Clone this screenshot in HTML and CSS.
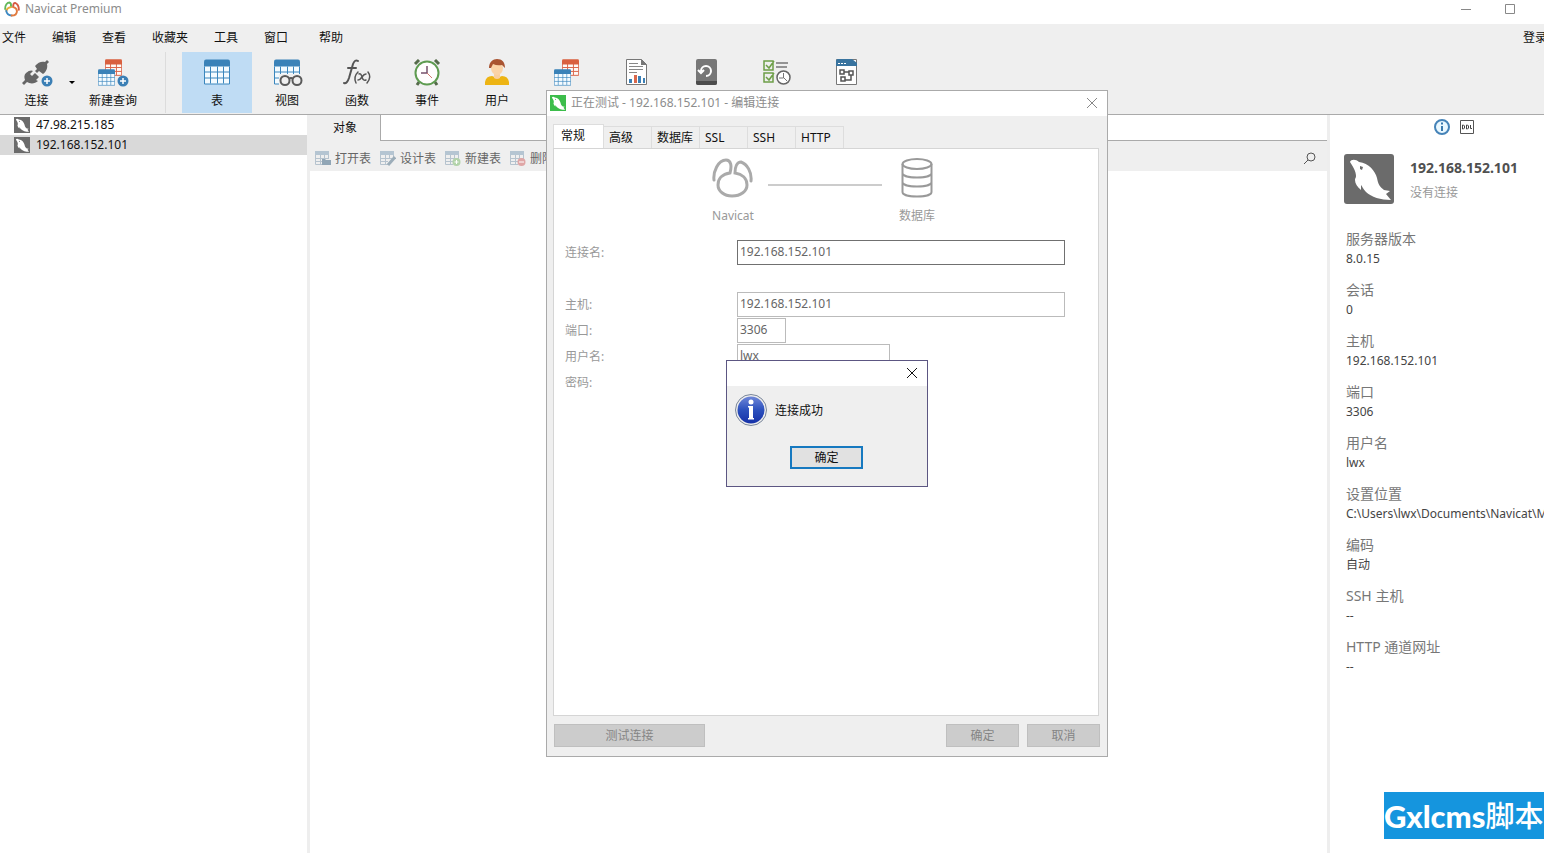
FILE: index.html
```html
<!DOCTYPE html>
<html lang="zh-CN">
<head>
<meta charset="utf-8">
<title>Navicat Premium</title>
<link rel="stylesheet" href="styles.css">
</head>
<body>
<svg class="defs" aria-hidden="true">
  <symbol id="dolphin" viewBox="0 0 50 50">
    <path fill="#fff" fill-rule="evenodd" d="M6 8C7 5 12 5 15 8C25 9 31 17 33 24C34 30 36 33 40 36L46 37L42 40L47 46C37 46 27 43 22 38C19 35 18 32 17 31L17 36C13 33 11 29 11 26C11 24 12 24 12 22C12 17 9 13 6 8ZM16 12l3 1-1 3-2-1z"/>
  </symbol>
  <symbol id="table" viewBox="0 0 26 25">
    <path fill="#f4fbff" d="M.5 1h25v23.500H.5z"/>
    <path fill="none" stroke="#3a86bd" d="M.5 7v17.500h25V7M.5 12.500h25M.5 18.500h25M6.500 7v17M13.500 7v17M19.500 7v17"/>
    <path fill="#3a82b8" d="M0 2q0-2 2-2h22q2 0 2 2v5H0z"/>
  </symbol>
  <symbol id="redtable" viewBox="0 0 26 25">
    <path fill="#fff9f6" d="M.5 1h25v23.500H.5z"/>
    <path fill="none" stroke="#d9674b" stroke-width="1.500" d="M.5 7v17.500h25V7M.5 12.500h25M.5 18.500h25M8.500 7v17M17.500 7v17"/>
    <path fill="#d9603f" d="M0 2q0-2 2-2h22q2 0 2 2v6H0z"/>
  </symbol>
  <symbol id="plus" viewBox="0 0 12 12">
    <circle cx="6" cy="6" r="5.500" fill="#3b7fb5"/><path stroke="#fff" stroke-width="1.500" d="M6 3v6M3 6h6"/>
  </symbol>
  <symbol id="minitable" viewBox="0 0 16 16">
    <path fill="none" stroke="#b6c3ce" d="M.5 4v9.500H8M.5 7.500h13M.5 10.500H8M5.500 4v9.500M9.500 4v4M13.500 4v4"/>
    <path fill="#b5c5d2" d="M0 0h14v4H0z"/>
  </symbol>
  <symbol id="rabbit" viewBox="0 0 42 40">
    <path stroke-linecap="round" d="M2 22C1 14 6 2 14 2C19 2 20 8 18 15M18 15C10 16 6 21 6 27C6 33 12 38 20 38C29 38 35 33 35 27C35 20 30 16 23 15C23 9 25 4 29 4C35 6 40 14 39 23"/>
  </symbol>
</svg>

<div class="app">
  <header class="titlebar">
    <svg class="logo" viewBox="0 0 42 40" fill="none" stroke-width="5" stroke-linecap="round"><path stroke="#62b75a" d="M3 20C3 10 8 3 15 3q5 2 3 12"/><path stroke="#e8aa3c" d="M18 15Q8 17 6 25"/><path stroke="#d65a43" d="M24 14Q24 4 29 4Q39 8 39 22"/><path stroke="#3c89c4" d="M6 25Q8 37 20 37"/><path stroke="#e27b3f" d="M20 37Q34 37 34 25Q33 16 24 15"/></svg>
    <h1 class="app-title">Navicat Premium</h1>
    <div class="window-buttons">
      <button aria-label="最小化"><svg width="12" height="12"><path d="M1 6.500h10"/></svg></button>
      <button aria-label="最大化"><svg width="12" height="12"><path d="M1.500 1.500h9v9h-9z"/></svg></button>
    </div>
  </header>
  <nav class="menubar">
    <button>文件</button><button>编辑</button><button>查看</button><button>收藏夹</button><button>工具</button><button>窗口</button><button class="help">帮助</button>
    <button class="login">登录</button>
  </nav>
  <div class="toolbar">
    <div class="starters">
      <button class="tool connect">
        <svg viewBox="0 0 32 28"><g fill="#666"><path d="M14 7C17 3 21 2 24 3L26 1L28 3L26 5C27 9 25 13 22 15L18 12L16 14L14 12L16 10z"/><path d="M5 14C8 11 11 11 12 12L9 15L11 17L14 14L18 18L15 21L17 22C14 25 9 25 6 23L3 26L1 24L4 21C3 18 3 16 5 14z"/></g><use href="#plus" x="20" y="16" width="12" height="12"/></svg>
        <span>连接</span>
      </button>
      <button class="arrow" aria-label="更多连接"><svg width="6" height="4"><path d="M0 0h6L3 3z"/></svg></button>
      <button class="tool query">
        <svg viewBox="0 0 32 28"><use href="#redtable" x="8" width="17" height="17"/><use href="#table" x="1" y="10" width="17" height="17"/><use href="#plus" x="20" y="16" width="12" height="12"/></svg>
        <span>新建查询</span>
      </button>
    </div>
    <button class="tool active"><svg viewBox="0 0 32 28"><use href="#table" x="3" y="0" width="26" height="26"/></svg><span>表</span></button>
    <button class="tool"><svg viewBox="0 0 32 28"><use href="#table" x="3" y="0" width="26" height="26"/><path fill="#efefef" d="M8 15h24v13H8z"/><g fill="#efefef" stroke="#5a5a5a" stroke-width="2"><circle cx="14" cy="21.500" r="4.500"/><circle cx="26" cy="21.500" r="4.500"/><path d="M18 20q2-2 4 0"/></g></svg><span>视图</span></button>
    <button class="tool"><svg viewBox="0 0 32 28" fill="none" stroke="#555" stroke-linecap="round"><path stroke-width="2" d="M3 24q3 1 5-5l4-14q2-5 5-3M7 9h8"/><path stroke-width="1.500" d="M17 13q-5 5-2 11M27 13q4 5-1 11M18 15q2-1 3 3t4 3M25 15q-2 0-4 3t-4 3"/></svg><span>函数</span></button>
    <button class="tool"><svg viewBox="0 0 32 28"><g fill="none"><path stroke="#566b4b" stroke-width="3" d="M4 5l4-4M24 1l4 4M8 23l-2 3M24 23l2 3"/><circle cx="16" cy="14" r="11.500" fill="#fffdfd" stroke="#5e9b50" stroke-width="2"/><path stroke="#76506b" stroke-width="1.500" d="M16 7v7h-6"/><path stroke="#ce766d" d="M16 14l5 5"/></g></svg><span>事件</span></button>
    <button class="tool"><svg viewBox="0 0 32 28"><path fill="#edb414" d="M4 26v-3q1-6 7-6l5 2 5-2q6 0 7 6v3z"/><path fill="#f9cfa0" d="M13 14h6v5q-3 2-6 0z"/><ellipse cx="16" cy="9" rx="6" ry="7" fill="#fbd3a7"/><path fill="#a95431" d="M8 9C8 3 12 0 16 0C21 0 24 3 24 9L21 6Q16 7 12 5L10 9z"/></svg><span>用户</span></button>
    <button class="tool" aria-label="查询"><svg viewBox="0 0 32 28"><use href="#redtable" x="11" width="17" height="17"/><use href="#table" x="3" y="10" width="17" height="17"/></svg></button>
    <button class="tool" aria-label="报表"><svg viewBox="0 0 32 28"><path fill="#fff" stroke="#777" d="M5.500.5h15l5 5v20h-20z"/><path fill="#777" d="M20 0v6h6z"/><path stroke="#888" d="M8 4.500h9M8 7.500h14M8 10.500h14M8 13.500h8"/><path fill="#3b7fb5" d="M8 20h3v4H8zM17 17h3v7h-3zM22 19h2v5h-2z"/><path fill="#d8684c" d="M13 16h3v8h-3z"/></svg></button>
    <button class="tool" aria-label="备份"><svg viewBox="0 0 32 28"><rect x="5" width="21" height="26" rx="2" fill="#777"/><path fill="#4c4c4c" d="M5 22h21v2q0 2-2 2H7q-2 0-2-2z"/><path fill="none" stroke="#fff" stroke-width="2" d="M10 12a5 5 0 1 1 5 5M7 11l3 3 3-3"/></svg></button>
    <button class="tool" aria-label="计划"><svg viewBox="0 0 32 28"><path fill="none" stroke="#6d9f48" stroke-width="1.500" d="M3 2h9v9H3zM3 14h9v9H3zM5 6l3 3 5-7M5 18l3 3 5-7"/><path stroke="#777" stroke-width="1.500" d="M15 4h12M15 8h11"/><circle cx="22.500" cy="18.500" r="6.500" fill="#fff" stroke="#666" stroke-width="1.500"/><path fill="none" stroke="#777" d="M22.500 14v5H18m5 0l3 3"/></svg></button>
    <button class="tool" aria-label="模型"><svg viewBox="0 0 32 28"><path fill="#fff" stroke="#777" d="M5.500.5h20v25h-20z"/><path fill="#39749f" d="M5 2q0-2 2-2h14l5 4v3H5z"/><path stroke="#fff" stroke-dasharray="2 1" d="M7 4.500h8"/><path fill="none" stroke="#555" stroke-width="1.500" d="M9 11h4v4H9zM18 12h4v4h-4zM10 18h4v4h-4zM13 13h5M20 16v5h-6"/></svg></button>
  </div>

  <main class="workspace">
    <aside class="connections">
      <button class="connection"><svg class="tile"><use href="#dolphin"/></svg>47.98.215.185</button>
      <button class="connection selected"><svg class="tile"><use href="#dolphin"/></svg>192.168.152.101</button>
    </aside>
    <section class="objects">
      <div class="object-tabs"><button class="object-tab">对象</button></div>
      <div class="object-actions">
        <button><svg viewBox="0 0 16 16"><use href="#minitable"/><path fill="#91a6b6" d="M7 8h3l1 1h5v5H7z"/></svg>打开表</button>
        <button><svg viewBox="0 0 16 16"><use href="#minitable"/><path stroke="#9cadb9" stroke-width="3" d="M15 6l-7 8"/></svg>设计表</button>
        <button><svg viewBox="0 0 16 16"><use href="#minitable"/><circle cx="11.500" cy="11" r="4" fill="#b3d3aa"/><path stroke="#fff" d="M11.500 9v4M9.500 11h4"/></svg>新建表</button>
        <button><svg viewBox="0 0 16 16"><use href="#minitable"/><circle cx="11.500" cy="11" r="4" fill="#dfa6a6"/><path stroke="#fff" d="M9 11h5"/></svg>删除表</button>
        <button class="search" aria-label="搜索"><svg viewBox="0 0 16 16" fill="none" stroke="#555"><circle cx="9" cy="6" r="4"/><path d="M6 9l-4 4"/></svg></button>
      </div>
    </section>
    <aside class="info">
      <div class="info-modes">
        <button aria-label="信息"><svg viewBox="0 0 16 16"><circle cx="8" cy="8" r="7" fill="#eaf8ff" stroke="#4583b8" stroke-width="2"/><path stroke="#3b79ad" stroke-width="2" d="M8 3.500v2M8 7v5"/></svg></button>
        <button aria-label="DDL"><svg viewBox="0 0 16 16"><path fill="#fff" stroke="#555" d="M1.500 1.500h13v13h-13z"/><path fill="none" stroke="#444" d="M3.500 6v4h1l1-1V7l-1-1zM7.500 6v4h1l1-1V7l-1-1zM11.500 6v3.500H13"/></svg></button>
      </div>
      <div class="identity">
        <svg class="tile big"><use href="#dolphin"/></svg>
        <div><h2>192.168.152.101</h2><p>没有连接</p></div>
      </div>
      <dl>
        <dt>服务器版本</dt><dd>8.0.15</dd>
        <dt>会话</dt><dd>0</dd>
        <dt>主机</dt><dd>192.168.152.101</dd>
        <dt>端口</dt><dd>3306</dd>
        <dt>用户名</dt><dd>lwx</dd>
        <dt>设置位置</dt><dd>C:\Users\lwx\Documents\Navicat\MySQL</dd>
        <dt>编码</dt><dd>自动</dd>
        <dt>SSH 主机</dt><dd>--</dd>
        <dt>HTTP 通道网址</dt><dd>--</dd>
      </dl>
    </aside>
  </main>
</div>

<section class="dialog" role="dialog" aria-labelledby="dialog-title">
  <header class="dialog-head">
    <svg class="tile green"><use href="#dolphin"/></svg>
    <h2 id="dialog-title">正在测试 - 192.168.152.101 - 编辑连接</h2>
    <button class="close" aria-label="关闭"><svg width="12" height="12"><path d="M1 1l10 10M11 1L1 11"/></svg></button>
  </header>
  <div class="dialog-tabs">
    <button class="current">常规</button><button>高级</button><button>数据库</button><button>SSL</button><button>SSH</button><button>HTTP</button>
  </div>
  <form class="panel">
    <div class="diagram">
      <figure><svg viewBox="0 0 42 40"><use href="#rabbit"/></svg><figcaption>Navicat</figcaption></figure>
      <hr>
      <figure><svg class="database" viewBox="0 0 42 40"><ellipse cx="21" cy="6" rx="14.500" ry="5"/><path d="M6.500 6v28c0 6 29 6 29 0V6M6.500 15c0 6 29 6 29 0M6.500 24c0 6 29 6 29 0"/></svg><figcaption>数据库</figcaption></figure>
    </div>
    <div class="field name"><label for="cname">连接名:</label><input id="cname" value="192.168.152.101"></div>
    <div class="field"><label for="host">主机:</label><input id="host" value="192.168.152.101"></div>
    <div class="field"><label for="port">端口:</label><input id="port" class="short" value="3306"></div>
    <div class="field"><label for="user">用户名:</label><input id="user" class="medium" value="lwx"></div>
    <div class="field"><label for="pass">密码:</label><input id="pass" class="medium" type="password"></div>
  </form>
  <footer class="dialog-foot">
    <button class="test" disabled>测试连接</button><button disabled>确定</button><button disabled>取消</button>
  </footer>
</section>

<section class="message" role="alertdialog" aria-labelledby="message-text">
  <header><button class="close" aria-label="关闭"><svg width="12" height="12"><path d="M1 1l10 10M11 1L1 11"/></svg></button></header>
  <div class="message-body">
    <svg viewBox="0 0 32 32"><defs><linearGradient id="blue" x2="0" y2="1"><stop stop-color="#6e86d8"/><stop offset=".5" stop-color="#2b50bd"/><stop offset="1" stop-color="#1530a8"/></linearGradient></defs><circle cx="16" cy="16" r="15.500" fill="#eee" stroke="#78859a"/><circle cx="16" cy="16" r="13.500" fill="url(#blue)"/><circle cx="16" cy="8" r="2.500" fill="#fff"/><path fill="#fff" d="M13 12h5v12h1v1.500h-6V24h1V13.500h-1z"/></svg>
    <p id="message-text">连接成功</p>
  </div>
  <button class="ok">确定</button>
</section>

<div class="watermark"><b>Gxlcms</b><span>脚本</span></div>
</body>
</html>
```
FILE: styles.css
```css
* { box-sizing: border-box; }
body {
  margin: 0;
  height: 100vh;
  overflow: hidden;
  position: relative;
  background: #fff;
  color: #111;
  font: 12px/20px "Noto Sans", "Noto Sans CJK SC", sans-serif;
}
button, input { font: inherit; color: inherit; }
button { border: 0; padding: 0; margin: 0; background: none; white-space: nowrap; }
h1, h2, p, dl, dd, figure { margin: 0; font-size: inherit; font-weight: normal; }
.defs { display: none; }
.app { height: 100%; display: flex; flex-direction: column; }

.titlebar { height: 24px; display: flex; align-items: center; padding: 0 28px 6px 4px; gap: 5px; color: #8c8c8c; }
.logo { width: 16px; height: 16px; }
.app-title { flex: 1; }
.window-buttons { display: flex; gap: 32px; }
.window-buttons button { height: 12px; display: flex; }
.window-buttons svg, .close svg { fill: none; stroke: #888; }

.menubar { background: #efefef; height: 27px; display: flex; align-items: center; gap: 26px; padding-left: 2px; }
.menubar .help { margin-left: 5px; }
.menubar .login { margin: 0 -3px 0 auto; }

.toolbar { background: #efefef; border-bottom: 1px solid #aaa; height: 64px; padding: 1px 0; display: flex; }
.starters { width: 166px; margin-right: 16px; border-right: 1px solid #dcdcdc; display: flex; flex: none; }
.tool { width: 70px; flex: none; display: flex; flex-direction: column; align-items: center; padding-top: 7px; gap: 4px; }
.tool svg { width: 32px; height: 28px; }
.tool.active { background: #bfdcf4; }
.tool.connect { width: 68px; padding-left: 5px; }
.arrow { width: 8px; padding-bottom: 4px; }
.starters .query { width: 74px; }

.workspace { flex: 1; min-height: 0; display: flex; }
.connections { flex: 0 0 310px; border-right: 3px solid #eee; }
.connection { width: 100%; height: 20px; display: flex; align-items: center; gap: 6px; padding-left: 14px; }
.connection.selected { background: #d9d9d9; }
.tile { width: 16px; height: 16px; background: #6b6b6b; flex: none; }
.tile.big { width: 50px; height: 50px; border-radius: 3px; }
.tile.green { background: #3cbd4b; }

.objects { flex: 1; min-width: 0; }
.object-tabs { height: 26px; border-bottom: 1px solid #aaa; display: flex; }
.object-tab { width: 71px; height: 26px; background: #efefef; border-right: 1px solid #aaa; }
.object-actions { height: 30px; background: #efefef; padding: 5px 9px 0 5px; display: flex; gap: 9px; align-items: center; color: #666; }
.object-actions button { display: flex; align-items: center; gap: 4px; }
.object-actions svg { width: 16px; height: 16px; }
.object-actions .search { margin-left: auto; }

.info { flex: 0 0 217px; border-left: 3px solid #eee; overflow: hidden; padding: 4px 0 0 14px; }
.info-modes { display: flex; gap: 9px; padding-left: 90px; }
.info-modes button, .info-modes svg { width: 16px; height: 16px; display: block; }
.identity { display: flex; gap: 16px; margin: 19px 0 25px; }
.identity h2 { font-size: 14px; font-weight: bold; color: #505050; padding-top: 4px; }
.identity p { color: #999; padding-top: 5px; }
.info dl { padding-left: 2px; white-space: nowrap; }
.info dt { font-size: 14px; color: #777; }
.info dd { color: #444; margin-bottom: 11px; }

.dialog { position: absolute; left: 546px; top: 90px; width: 562px; background: #efefef; border: 1px solid #aaa; padding-bottom: 9px; }
.dialog-head { height: 25px; background: #fff; display: flex; align-items: center; gap: 5px; padding: 0 9px 1px 3px; color: #8c8c8c; }
.dialog-head h2 { flex: 1; }
.close { height: 12px; display: flex; }
.dialog-tabs { display: flex; align-items: flex-end; padding: 8px 6px 0; }
.dialog-tabs button { width: 48px; height: 22px; text-align: left; padding-left: 5px; border: 1px solid #ddd; border-width: 1px 1px 0 0; }
.dialog-tabs .current { width: 51px; height: 24px; background: #fff; padding: 0 0 1px 7px; border-left-width: 1px; }
.panel { background: #fff; border: 1px solid #d5d5d5; margin: 0 8px 8px 6px; height: 568px; padding: 9px 11px; color: #999; }
.diagram { display: flex; justify-content: center; padding-right: 2px; gap: 14px; margin-bottom: 14px; }
.diagram figure { width: 42px; display: flex; flex-direction: column; align-items: center; gap: 8px; white-space: nowrap; }
.diagram svg { width: 42px; height: 40px; fill: none; stroke: #aaa; stroke-width: 3; }
.diagram .database { stroke: #999; stroke-width: 2; }
.diagram hr { width: 114px; border: 0; border-top: 2px solid #ccc; margin: 26px 0 0; }
.field { display: flex; align-items: center; height: 25px; margin-bottom: 1px; }
.field.name { margin-bottom: 27px; }
.field label { width: 172px; }
.field input { width: 328px; height: 25px; border: 1px solid #bbb; background: #fff; padding: 0 2px 2px; color: #666; outline: 0; }
.field.name input { border-color: #707070; }
.field .short { width: 49px; }
.field .medium { width: 153px; }
.dialog-foot { display: flex; gap: 8px; padding: 0 7px; }
.dialog-foot button { width: 73px; height: 23px; background: #ccc; border: 1px solid #bfbfbf; color: #858585; }
.dialog-foot .test { width: 151px; margin-right: auto; }

.message { position: absolute; left: 726px; top: 360px; width: 202px; background: #efefef; border: 1px solid #5c5682; padding-bottom: 17px; }
.message header { height: 25px; background: #fff; display: flex; justify-content: flex-end; align-items: center; padding: 0 9px 1px 0; }
.message .close svg { stroke: #111; }
.message-body { display: flex; align-items: center; gap: 8px; padding: 8px; }
.message-body svg { width: 32px; height: 32px; }
.message-body p { padding-top: 2px; }
.ok { display: block; width: 73px; height: 23px; margin: 12px 0 0 63px; background: #e1e1e1; border: 2px solid #1679c0; line-height: 18px; }

.watermark { position: absolute; right: 0; bottom: 14px; height: 47px; width: 160px; background: #1595de; color: #fff; display: flex; align-items: center; overflow: hidden; white-space: nowrap; font-size: 29px; font-weight: 500; }
.watermark b { font: 900 31px Lato, sans-serif; }
```
